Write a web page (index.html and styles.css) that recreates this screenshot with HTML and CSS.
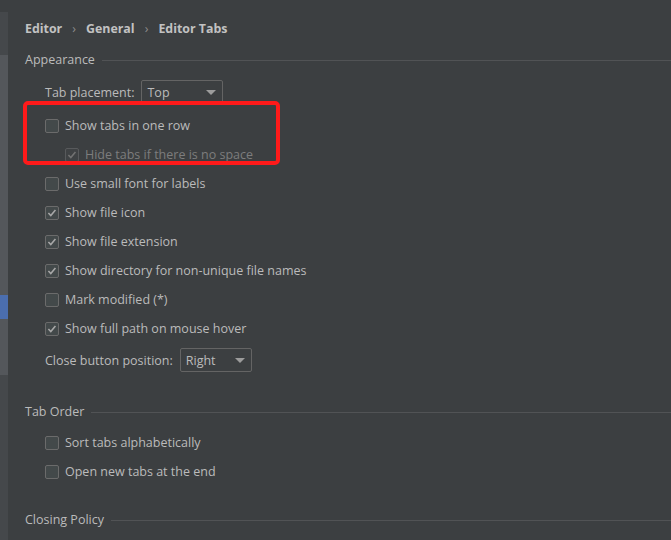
FILE: index.html
```html
<!DOCTYPE html>
<html>
<head>
<meta charset="utf-8">
<link rel="stylesheet" href="styles.css">
</head>
<body>
<div class="window">
  <div class="strip">
    <div class="seg s1"></div>
    <div class="seg s2"></div>
    <div class="seg s3"></div>
    <div class="seg s4"></div>
    <div class="seg s5"></div>
    <div class="seg s6"></div>
  </div>
  <div class="main">
    <div class="crumbs">
      <span>Editor</span><span class="sep">›</span><span>General</span><span class="sep">›</span><span>Editor Tabs</span>
    </div>

    <div class="section-title appearance"><span>Appearance</span><div class="rule"></div></div>

    <div class="field top-field">
      <span class="label">Tab placement:</span>
      <div class="combo combo-top"><span>Top</span><span class="arrow"></span></div>
    </div>

    <div class="checks first-checks">
      <div class="check"><span class="box"></span><span>Show tabs in one row</span></div>
      <div class="check sub disabled"><span class="box on"><svg viewBox="0 0 14 14"><path d="M2.8 7 L5.6 10 L11 3.4"/></svg></span><span>Hide tabs if there is no space</span></div>
      <div class="check"><span class="box"></span><span>Use small font for labels</span></div>
      <div class="check"><span class="box on"><svg viewBox="0 0 14 14"><path d="M2.8 7 L5.6 10 L11 3.4"/></svg></span><span>Show file icon</span></div>
      <div class="check"><span class="box on"><svg viewBox="0 0 14 14"><path d="M2.8 7 L5.6 10 L11 3.4"/></svg></span><span>Show file extension</span></div>
      <div class="check"><span class="box on"><svg viewBox="0 0 14 14"><path d="M2.8 7 L5.6 10 L11 3.4"/></svg></span><span>Show directory for non-unique file names</span></div>
      <div class="check"><span class="box"></span><span>Mark modified (*)</span></div>
      <div class="check"><span class="box on"><svg viewBox="0 0 14 14"><path d="M2.8 7 L5.6 10 L11 3.4"/></svg></span><span>Show full path on mouse hover</span></div>
    </div>

    <div class="field close-field">
      <span class="label">Close button position:</span>
      <div class="combo combo-close"><span>Right</span><span class="arrow"></span></div>
    </div>

    <div class="section-title taborder"><span>Tab Order</span><div class="rule"></div></div>
    <div class="checks order-checks">
      <div class="check"><span class="box"></span><span>Sort tabs alphabetically</span></div>
      <div class="check"><span class="box"></span><span>Open new tabs at the end</span></div>
    </div>

    <div class="section-title closing"><span>Closing Policy</span><div class="rule"></div></div>

    <div class="highlight"></div>
  </div>
</div>
</body>
</html>
```
FILE: styles.css
```css
html, body {
  margin: 0;
  padding: 0;
  background: #3c3f41;
}
body {
  width: 671px;
  height: 540px;
  overflow: hidden;
  font-family: "Open Sans", "Noto Sans", sans-serif;
  font-size: 12.5px;
  color: #bbbbbb;
}
.window {
  display: flex;
  width: 671px;
  height: 540px;
}
.strip {
  width: 8px;
  display: flex;
  flex-direction: column;
  flex-shrink: 0;
}
.seg { width: 8px; }
.s1 { height: 12px; background: #3c3f41; }
.s2 { height: 43px; background: #45484b; }
.s3 { height: 240px; background: #54575b; }
.s4 { height: 24px; background: #4b6eaf; }
.s5 { height: 56px; background: #54575b; }
.s6 { flex: 1; background: #45484b; }

.main {
  position: relative;
  flex: 1;
  padding-left: 17px;
}
.crumbs {
  margin-top: 19px;
  height: 20px;
  line-height: 20px;
  font-weight: 700;
  font-size: 12.4px;
  color: #c2c2c2;
  display: flex;
}
.crumbs .sep {
  font-weight: 400;
  color: #8c8c8c;
  margin: 0 10px 0 10px;
}
.section-title {
  display: flex;
  align-items: center;
  height: 20px;
  line-height: 20px;
}
.section-title .rule {
  flex: 1;
  height: 1px;
  background: #515355;
  margin-left: 7px;
}
.appearance { margin-top: 11px; }
.field {
  display: flex;
  align-items: center;
  height: 24px;
  padding-left: 20px;
}
.top-field { margin-top: 10px; }
.label { margin-right: 7px; }
.combo {
  box-sizing: border-box;
  height: 24px;
  border: 1px solid #646464;
  border-radius: 2px;
  display: flex;
  align-items: center;
  justify-content: space-between;
  padding: 0 6px 0 5px;
}
.combo-top { width: 82px; }
.combo-close { width: 72px; }
.arrow {
  width: 0;
  height: 0;
  border-left: 5px solid transparent;
  border-right: 5px solid transparent;
  border-top: 5px solid #9c9c9c;
}
.checks {
  display: flex;
  flex-direction: column;
  padding-left: 20px;
}
.first-checks { margin-top: 7px; }
.check {
  height: 29px;
  display: flex;
  align-items: center;
}
.check.sub { padding-left: 20px; }
.check.disabled { color: #7d7d7d; }
.box {
  box-sizing: border-box;
  width: 14px;
  height: 14px;
  border: 1px solid #6b6b6b;
  border-radius: 2px;
  background: #43494a;
  margin-right: 6px;
  display: flex;
}
.box svg { width: 12px; height: 12px; }
.box path {
  fill: none;
  stroke: #a8a8a8;
  stroke-width: 1.8;
}
.disabled .box { border-color: #585a5c; background: #3f4244; }
.disabled .box path { stroke: #727272; }
.close-field { margin-top: 5px; }
.taborder { margin-top: 30px; }
.order-checks { margin-top: 6px; }
.closing { margin-top: 24px; }

.highlight {
  position: absolute;
  left: 15px;
  top: 101px;
  width: 257px;
  height: 64px;
  box-sizing: border-box;
  border: 4px solid #ff1a1a;
  border-radius: 5px;
}
```
